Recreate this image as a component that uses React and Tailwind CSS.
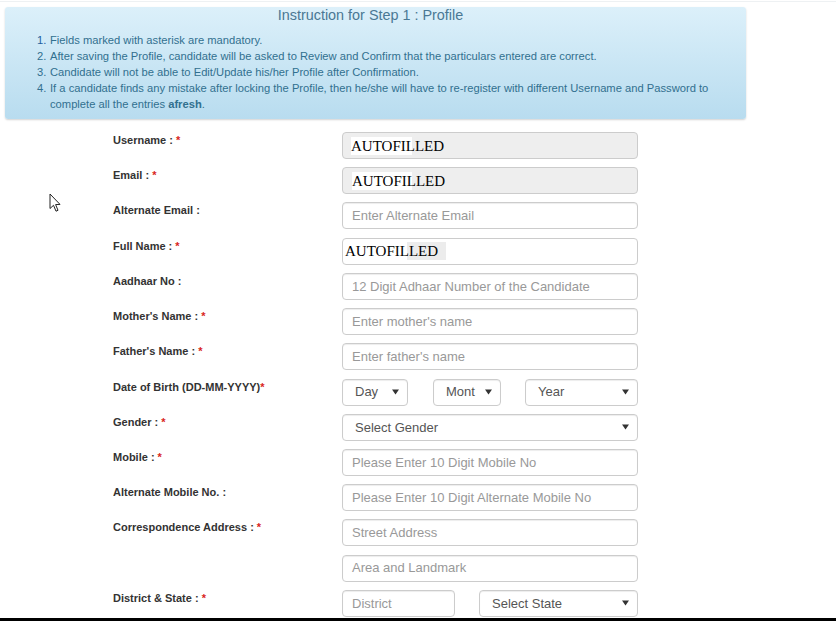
import React from 'react';

const Star = () => <span className="text-[#d9261c]">*</span>;

const Caret = () => (
  <svg width="7" height="6" viewBox="0 0 7 6" className="shrink-0">
    <path d="M0 0.5 L7 0.5 L3.5 5.5 Z" fill="#333" />
  </svg>
);

const TextBox = ({ placeholder, w = 'w-[296px]' }) => (
  <div className={`${w} h-[27px] flex items-center pl-[9px] border border-[#ccc] rounded-[4px] bg-white shadow-[inset_0_1px_1px_rgba(0,0,0,0.075)] text-[13px] text-[#999]`}>
    {placeholder}
  </div>
);

const FilledBox = ({ disabled, pad, mark }) => (
  <div
    className={`w-[296px] h-[27px] flex items-center border border-[#ccc] rounded-[4px] ${disabled ? 'bg-[#eee]' : 'bg-white'} ${pad}`}
  >
    <span className={`font-['Liberation_Serif',serif] text-[15px] leading-[18px] text-black ${mark}`}>AUTOFILLED</span>
  </div>
);

const SelectBox = ({ label, w }) => (
  <div className={`${w} h-[27px] flex items-center justify-between pl-[12px] pr-[8px] border border-[#ccc] rounded-[4px] bg-white shadow-[inset_0_1px_1px_rgba(0,0,0,0.075)] text-[13px] text-[#555]`}>
    <span className="whitespace-nowrap">{label}</span>
    <Caret />
  </div>
);

const Row = ({ label, children }) => (
  <div className="flex h-[27px]">
    <div className="w-[229px] pt-px text-[11px] leading-[14px] font-bold text-[#333]">{label}</div>
    <div className="flex">{children}</div>
  </div>
);

export default function App() {
  return (
    <div className="relative w-[836px] h-[621px] flex flex-col bg-white overflow-hidden font-['Liberation_Sans',Arial,sans-serif]">
      <div className="h-px mt-[1px] bg-[#eef1f3]" />

      {/* Instructions panel */}
      <div className="ml-[5px] mt-[5px] w-[741px] h-[112px] rounded-[3px] bg-[linear-gradient(to_bottom,#dcf0fa,#b8dcef)] shadow-[0_1px_2px_rgba(0,0,0,0.18)] text-[#31708f]">
        <h2 className="pr-[10px] text-center text-[14.4px] leading-[16px] text-[#4a7894]">
          Instruction for Step 1 : Profile
        </h2>
        <ol className="mt-[9px] ml-[32px] text-[11.2px] leading-[16px]">
          <li className="flex"><span className="w-[13px] text-[#1f5f9f]">1.</span><span>Fields marked with asterisk are mandatory.</span></li>
          <li className="flex"><span className="w-[13px]">2.</span><span>After saving the Profile, candidate will be asked to Review and Confirm that the particulars entered are correct.</span></li>
          <li className="flex"><span className="w-[13px]">3.</span><span>Candidate will not be able to Edit/Update his/her Profile after Confirmation.</span></li>
          <li className="flex">
            <span className="w-[13px] shrink-0">4.</span>
            <span>
              If a candidate finds any mistake after locking the Profile, then he/she will have to re-register with different Username and Password to
              <br />
              complete all the entries <b>afresh</b>.
            </span>
          </li>
        </ol>
      </div>

      {/* Profile form */}
      <div className="flex-1 overflow-hidden ml-[113px] mt-[13px] flex flex-col gap-[8.23px]">
        <Row label={<>Username : <Star /></>}>
          <FilledBox disabled pad="pl-[8px]" mark="bg-[linear-gradient(to_right,#fff_61px,transparent_61px)]" />
        </Row>
        <Row label={<>Email : <Star /></>}>
          <FilledBox disabled pad="pl-[9px]" mark="bg-[linear-gradient(to_right,#fff_60px,transparent_60px)]" />
        </Row>
        <Row label="Alternate Email :">
          <TextBox placeholder="Enter Alternate Email" />
        </Row>
        <Row label={<>Full Name : <Star /></>}>
          <FilledBox pad="pl-[2px]" mark="pr-[8px] bg-[linear-gradient(to_right,#fff_62px,#ececec_62px)]" />
        </Row>
        <Row label="Aadhaar No :">
          <TextBox placeholder="12 Digit Adhaar Number of the Candidate" />
        </Row>
        <Row label={<>Mother's Name : <Star /></>}>
          <TextBox placeholder="Enter mother's name" />
        </Row>
        <Row label={<>Father's Name : <Star /></>}>
          <TextBox placeholder="Enter father's name" />
        </Row>
        <Row label={<>Date of Birth (DD-MM-YYYY)<Star /></>}>
          <div className="flex">
            <SelectBox label="Day" w="w-[66px]" />
            <div className="ml-[25px]">
              <SelectBox label="Mont" w="w-[68px]" />
            </div>
            <div className="ml-[24px]">
              <SelectBox label="Year" w="w-[113px]" />
            </div>
          </div>
        </Row>
        <Row label={<>Gender : <Star /></>}>
          <SelectBox label="Select Gender" w="w-[296px]" />
        </Row>
        <Row label={<>Mobile : <Star /></>}>
          <TextBox placeholder="Please Enter 10 Digit Mobile No" />
        </Row>
        <Row label="Alternate Mobile No. :">
          <TextBox placeholder="Please Enter 10 Digit Alternate Mobile No" />
        </Row>
        <Row label={<>Correspondence Address : <Star /></>}>
          <TextBox placeholder="Street Address" />
        </Row>
        <Row label="">
          <TextBox placeholder="Area and Landmark" />
        </Row>
        <Row label={<>District &amp; State : <Star /></>}>
          <div className="flex">
            <TextBox placeholder="District" w="w-[113px]" />
            <div className="ml-[24px]">
              <SelectBox label="Select State" w="w-[159px]" />
            </div>
          </div>
        </Row>
      </div>

      <div className="h-[3px] bg-black shrink-0" />

      {/* mouse pointer */}
      <svg className="absolute left-[49px] top-[193px]" width="12" height="20" viewBox="0 0 12 20">
        <path d="M1 1 L1 15.5 L4.5 12.3 L7 18.2 L9 17.3 L6.6 11.6 L11 11.4 Z" fill="#fff" stroke="#222" strokeWidth="1" strokeLinejoin="round" />
      </svg>
    </div>
  );
}
